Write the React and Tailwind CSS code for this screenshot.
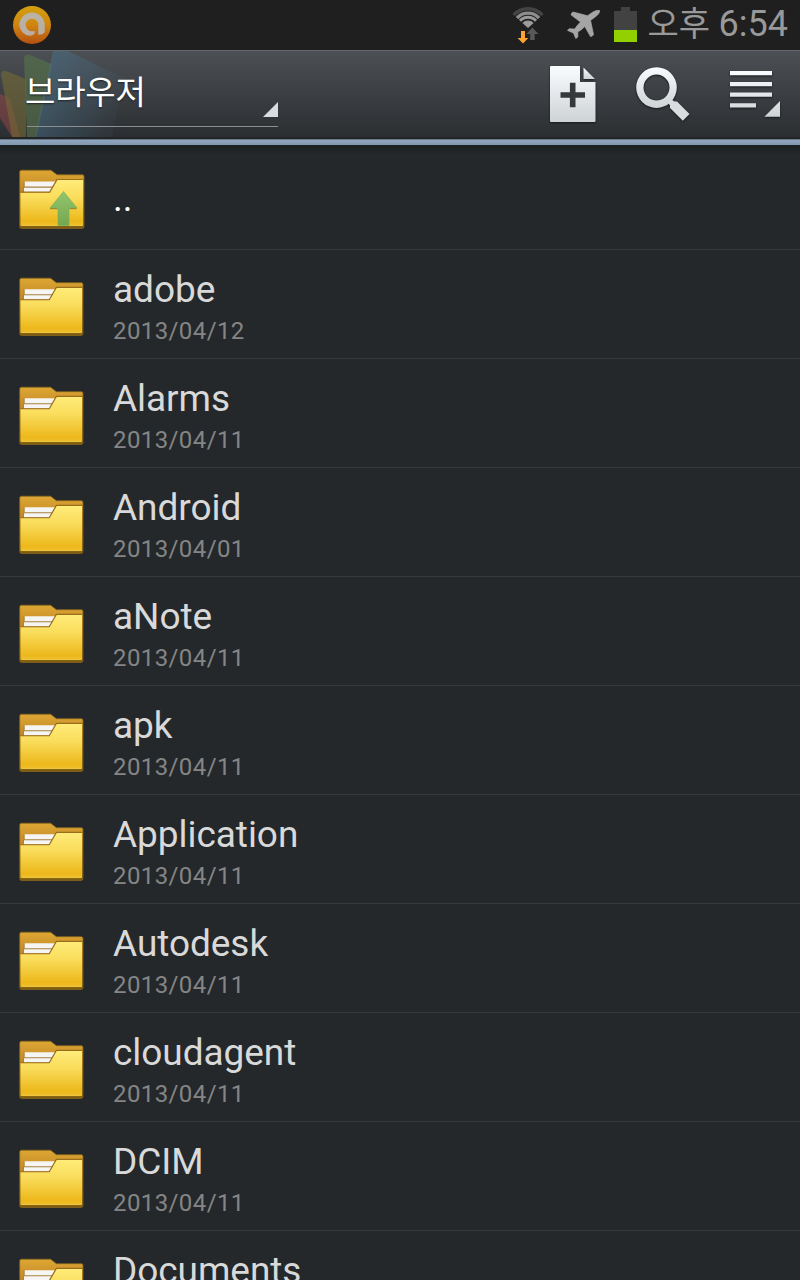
import React from "react";

const files = [
  { name: "adobe", date: "2013/04/12" },
  { name: "Alarms", date: "2013/04/11" },
  { name: "Android", date: "2013/04/01" },
  { name: "aNote", date: "2013/04/11" },
  { name: "apk", date: "2013/04/11" },
  { name: "Application", date: "2013/04/11" },
  { name: "Autodesk", date: "2013/04/11" },
  { name: "cloudagent", date: "2013/04/11" },
  { name: "DCIM", date: "2013/04/11" },
  { name: "Documents", date: "2013/04/11" }
];

// shared gradients, referenced by every icon on the page
const Gradients = () => (
  <svg className="absolute w-0 h-0" aria-hidden="true">
    <defs>
      <linearGradient id="back" x1="0" y1="0" x2="0" y2="1">
        <stop offset="0" stopColor="#dda734" />
        <stop offset="0.35" stopColor="#c48a27" />
        <stop offset="0.9" stopColor="#8f6a14" />
        <stop offset="1" stopColor="#7c5b10" />
      </linearGradient>
      <linearGradient id="front" x1="0" y1="0" x2="0" y2="1">
        <stop offset="0" stopColor="#ffec7a" />
        <stop offset="0.4" stopColor="#f9dc5a" />
        <stop offset="0.9" stopColor="#edb81c" />
        <stop offset="1" stopColor="#efbf2c" />
      </linearGradient>
      <linearGradient id="arrow" x1="0" y1="0" x2="0" y2="1">
        <stop offset="0" stopColor="#93c46e" />
        <stop offset="1" stopColor="#75a750" />
      </linearGradient>
      <linearGradient id="metal" x1="0" y1="0" x2="0" y2="1">
        <stop offset="0" stopColor="#fafcfe" />
        <stop offset="1" stopColor="#ced3d6" />
      </linearGradient>
      <linearGradient id="orange" x1="0" y1="0" x2="0" y2="1">
        <stop offset="0" stopColor="#d3a00f" />
        <stop offset="0.5" stopColor="#cf850f" />
        <stop offset="1" stopColor="#b45112" />
      </linearGradient>
      <linearGradient id="letter" x1="0" y1="0" x2="0" y2="1">
        <stop offset="0" stopColor="#b9b3a5" />
        <stop offset="1" stopColor="#b9ada5" />
      </linearGradient>
    </defs>
  </svg>
);

const FolderIcon = ({ up }) => (
  <svg viewBox="0 -0.500 66 60" className={up ? "w-[66px] h-[60px]" : "w-[65px] h-[59px]"}>
    <path d="M2.500.7H32L38 5.300H63.500Q65 5.300 65 7V57Q65 59 63 59H2.500Q.7 59 .7 57V2.500Q.7.7 2.500.7Z" fill="url(#back)" stroke="#89651b" strokeWidth="0.800" />
    <path d="M5.500 12H37L31.500 22.500H4.500V17.500H5.500Z" fill="#f5f5f4" />
    <path d="M5 12V17.600H34M4.500 17.600V22.500" fill="none" stroke="#a9813f" strokeWidth="1.100" />
    <path d="M1.500 23H31L38.300 10.400H64V56.200H1.500Z" fill="url(#front)" />
    <path d="M1.300 22.600H30.700L38 10H64.300" fill="none" stroke="#9a6d19" strokeWidth="1.200" />
    <path d="M2.500 56H63.500" stroke="#f5cd48" strokeWidth="0.800" />
    {up && (
      <>
        <path d="M31 39.200H38.600M50.500 39.200H57.500" stroke="#8a7022" strokeWidth="1" />
        <path d="M44.500 22L58 38.600H50V56H39V38.600H31Z" fill="url(#arrow)" stroke="#79ad58" strokeWidth="0.600" />
      </>
    )}
  </svg>
);

const BadgeIcon = () => (
  <svg viewBox="0 0 38 38" className="w-[38px] h-[38px]">
    <circle cx="19" cy="19" r="19" fill="url(#orange)" />
    <path d="M19 6.500A12.700 12.700 0 0 1 31.700 19V25.500Q31.500 28.500 25.300 28.800V19A6.300 6.300 0 1 0 19 25.300H22.300Q21.300 29.800 16.500 29.800A12 12 0 0 1 6.300 19A12.700 12.700 0 0 1 19 6.500Z" fill="url(#letter)" />
  </svg>
);

const WifiIcon = () => (
  <svg viewBox="0 0 34 38" className="w-[34px] h-[38px]">
    <path d="M1.700 9.100A19.300 19.300 0 0 1 30.300 9.100" fill="none" stroke="#444" strokeWidth="3.600" />
    <path d="M5 12.100A14.800 14.800 0 0 1 27 12.100" fill="none" stroke="#8d8d8d" strokeWidth="3.300" />
    <path d="M8 14.800A10.700 10.700 0 0 1 24 14.800" fill="none" stroke="#999" strokeWidth="2.900" />
    <path d="M10.400 16.900A7.600 7.600 0 0 1 21.600 16.900L16 22Z" fill="#9b9b9b" />
    <path d="M9 25H13V32H16.200L11 37.500L5.600 32H9Z" fill="#fda331" />
    <path d="M20.300 21.500L26.500 28H22.700V34H18.200V28H14.500Z" fill="#585858" />
  </svg>
);

const PlaneIcon = () => (
  <svg viewBox="0 0 34 30" className="w-[34px] h-[30px]">
    <path d="M32.500.5Q30-.5 26 2L20.500 5.800L6 2Q4 3 4.200 5L13.500 12Q9.500 16 7.800 19L2 18.800L.6 20.400L6.500 23L8.800 28.500L10.800 27L10.800 21.800Q14 20.500 17.800 16.500L23.500 26.500Q25.500 26.500 26.500 24.500L23.500 10.500L30.500 5Q33 2.500 32.500.5Z" fill="#a5a5a5" stroke="#a5a5a5" strokeWidth="0.800" strokeLinejoin="round" />
  </svg>
);

const BatteryIcon = () => (
  <svg viewBox="0 0 23 35" className="w-[23px] h-[35px]">
    <path d="M7 0H16V4H23V23H0V4H7Z" fill="#424242" />
    <path d="M0 23H23V35H0Z" fill="#93d000" />
  </svg>
);

const NewFileIcon = () => (
  <svg viewBox="0 0 48 58" className="w-[48px] h-[58px] drop-shadow-[0_1px_1px_#17191a]">
    <path d="M2 1H31V17H46.500V56Q46.500 57 45.500 57H2Q1 57 1 56V2Q1 1 2 1Z" fill="url(#metal)" />
    <path d="M34.500 2.500L46 14H34.500Z" fill="url(#metal)" />
    <path d="M23.700 17.800V42.200M11.500 30H36" stroke="#35393c" strokeWidth="5.600" />
  </svg>
);

const SearchIcon = () => (
  <svg viewBox="0 0 54 54" className="w-[54px] h-[54px] drop-shadow-[0_1px_1px_#17191a]">
    <path fillRule="evenodd" d="M20.500.3A20.300 20.300 0 1 0 20.500 40.900A20.300 20.300 0 1 0 20.500.3ZM20.500 7.600A13 13 0 1 1 20.500 33.600A13 13 0 1 1 20.500 7.600Z" fill="url(#metal)" />
    <path d="M32 35.500L35.500 32.500L38.500 34.500H41L53.500 47L46.800 53.700L34 41V38.500Z" fill="#d9dddf" />
  </svg>
);

const MenuIcon = () => (
  <svg viewBox="0 0 52 48" className="w-[52px] h-[48px] drop-shadow-[0_1px_1px_#17191a]">
    <path d="M0 1H42V5.300H0ZM0 12H42V16.300H0ZM0 22.500H42V26.800H0ZM0 33.300H26V37.500H0ZM50 31V46.700H34.300Z" fill="url(#metal)" />
  </svg>
);

const StatusBar = () => (
  <div className="flex items-center justify-between h-[50px] bg-[#1f1f1f] pl-[13px] pr-3">
    <BadgeIcon />
    <div className="flex items-start h-full">
      <div className="mt-[6px]"><WifiIcon /></div>
      <div className="mt-[10px] ml-[21px]"><PlaneIcon /></div>
      <div className="mt-[7px] ml-[13px]"><BatteryIcon /></div>
      <div className="flex items-baseline h-[50px] -mt-[3px] leading-[50px] text-[#999] ml-[11px] whitespace-nowrap">
        <span className="w-[71px] text-[34px] font-['Noto_Sans_CJK_KR',sans-serif]">오후</span>
        <span className="text-[36px] font-['Roboto',sans-serif]">6:54</span>
      </div>
    </div>
  </div>
);

const ActionBar = () => (
  <div className="relative flex items-start justify-between h-[89px] border-t border-[#64686c] bg-linear-to-b from-[#4c5054] to-[#2b2e31]">
    {/* faded app logo behind the title */}
    <svg viewBox="0 0 130 86" className="absolute left-0 top-0 w-[130px] h-[86px]">
      <defs>
        <linearGradient id="fade" x1="0" y1="0" x2="1" y2="0.300">
          <stop offset="0" stopColor="#497088" stopOpacity="0.650" />
          <stop offset="1" stopColor="#497088" stopOpacity="0.080" />
        </linearGradient>
      </defs>
      <path d="M0 43L10 47L20 86H12L0 67Z" fill="#a34a4a" opacity="0.450" />
      <path d="M1 23Q2 19 6 20L26 28V86H12Z" fill="#746b35" opacity="0.600" />
      <path d="M24 7Q25 3 30 4L52 13L36 86H27Z" fill="#56714a" opacity="0.650" />
      <path d="M53 0H68L124 27L112 86H35Z" fill="url(#fade)" />
    </svg>
    <div className="relative w-[251px] h-[76px] ml-[27px] border-b border-[#8b8f92]">
      <h1 className="-ml-[2px] pt-[14px] text-[33px] leading-[50px] tracking-[-0.2px] text-white whitespace-nowrap font-['Noto_Sans_CJK_KR',sans-serif] text-shadow-[0_1px_2px_#222]">브라우저</h1>
      <svg viewBox="0 0 15 15" className="absolute right-0 bottom-[9px] w-[15px] h-[15px]">
        <path d="M15 0V15H0Z" fill="#d9dddf" />
      </svg>
    </div>
    <div className="flex items-start pt-[14px] pr-[18px]">
      <NewFileIcon />
      <div className="ml-[39px] mt-[2px]"><SearchIcon /></div>
      <div className="ml-10 mt-[5px]"><MenuIcon /></div>
    </div>
    <div className="absolute left-0 bottom-0 w-full h-[2px] bg-[#222426]" />
  </div>
);

export default function FileBrowser() {
  return (
    <div className="w-[800px] h-[1280px] overflow-hidden bg-[#24282b] font-['Roboto',sans-serif]">
      <Gradients />
      <StatusBar />
      <ActionBar />
      <div className="h-[6px] border-t border-[#66778a] bg-linear-to-b from-[#91a6bf] to-[#8098ad]" />
      <div className="flex items-start h-[105px] border-b border-[#363a3d] bg-linear-to-b from-[#1b2023] to-[#24282b] to-10% pl-[19px]">
        <div className="mt-[24px]"><FolderIcon up /></div>
        <span className="ml-[28px] mt-[29px] text-[37px] leading-[50px] text-white">..</span>
      </div>
      {files.map((file) => (
        <div key={file.name} className="flex items-start h-[109px] border-b border-[#363a3d] pl-[19px]">
          <div className="mt-[27px]"><FolderIcon /></div>
          <div className="ml-[29px] pt-[17px]">
            <div className="text-[37px] leading-[46px] tracking-[-0.05px] text-[#d9d9d9]">{file.name}</div>
            <div className="mt-[3px] text-[24px] leading-[30px] tracking-[0.4px] text-[#858585]">{file.date}</div>
          </div>
        </div>
      ))}
    </div>
  );
}
